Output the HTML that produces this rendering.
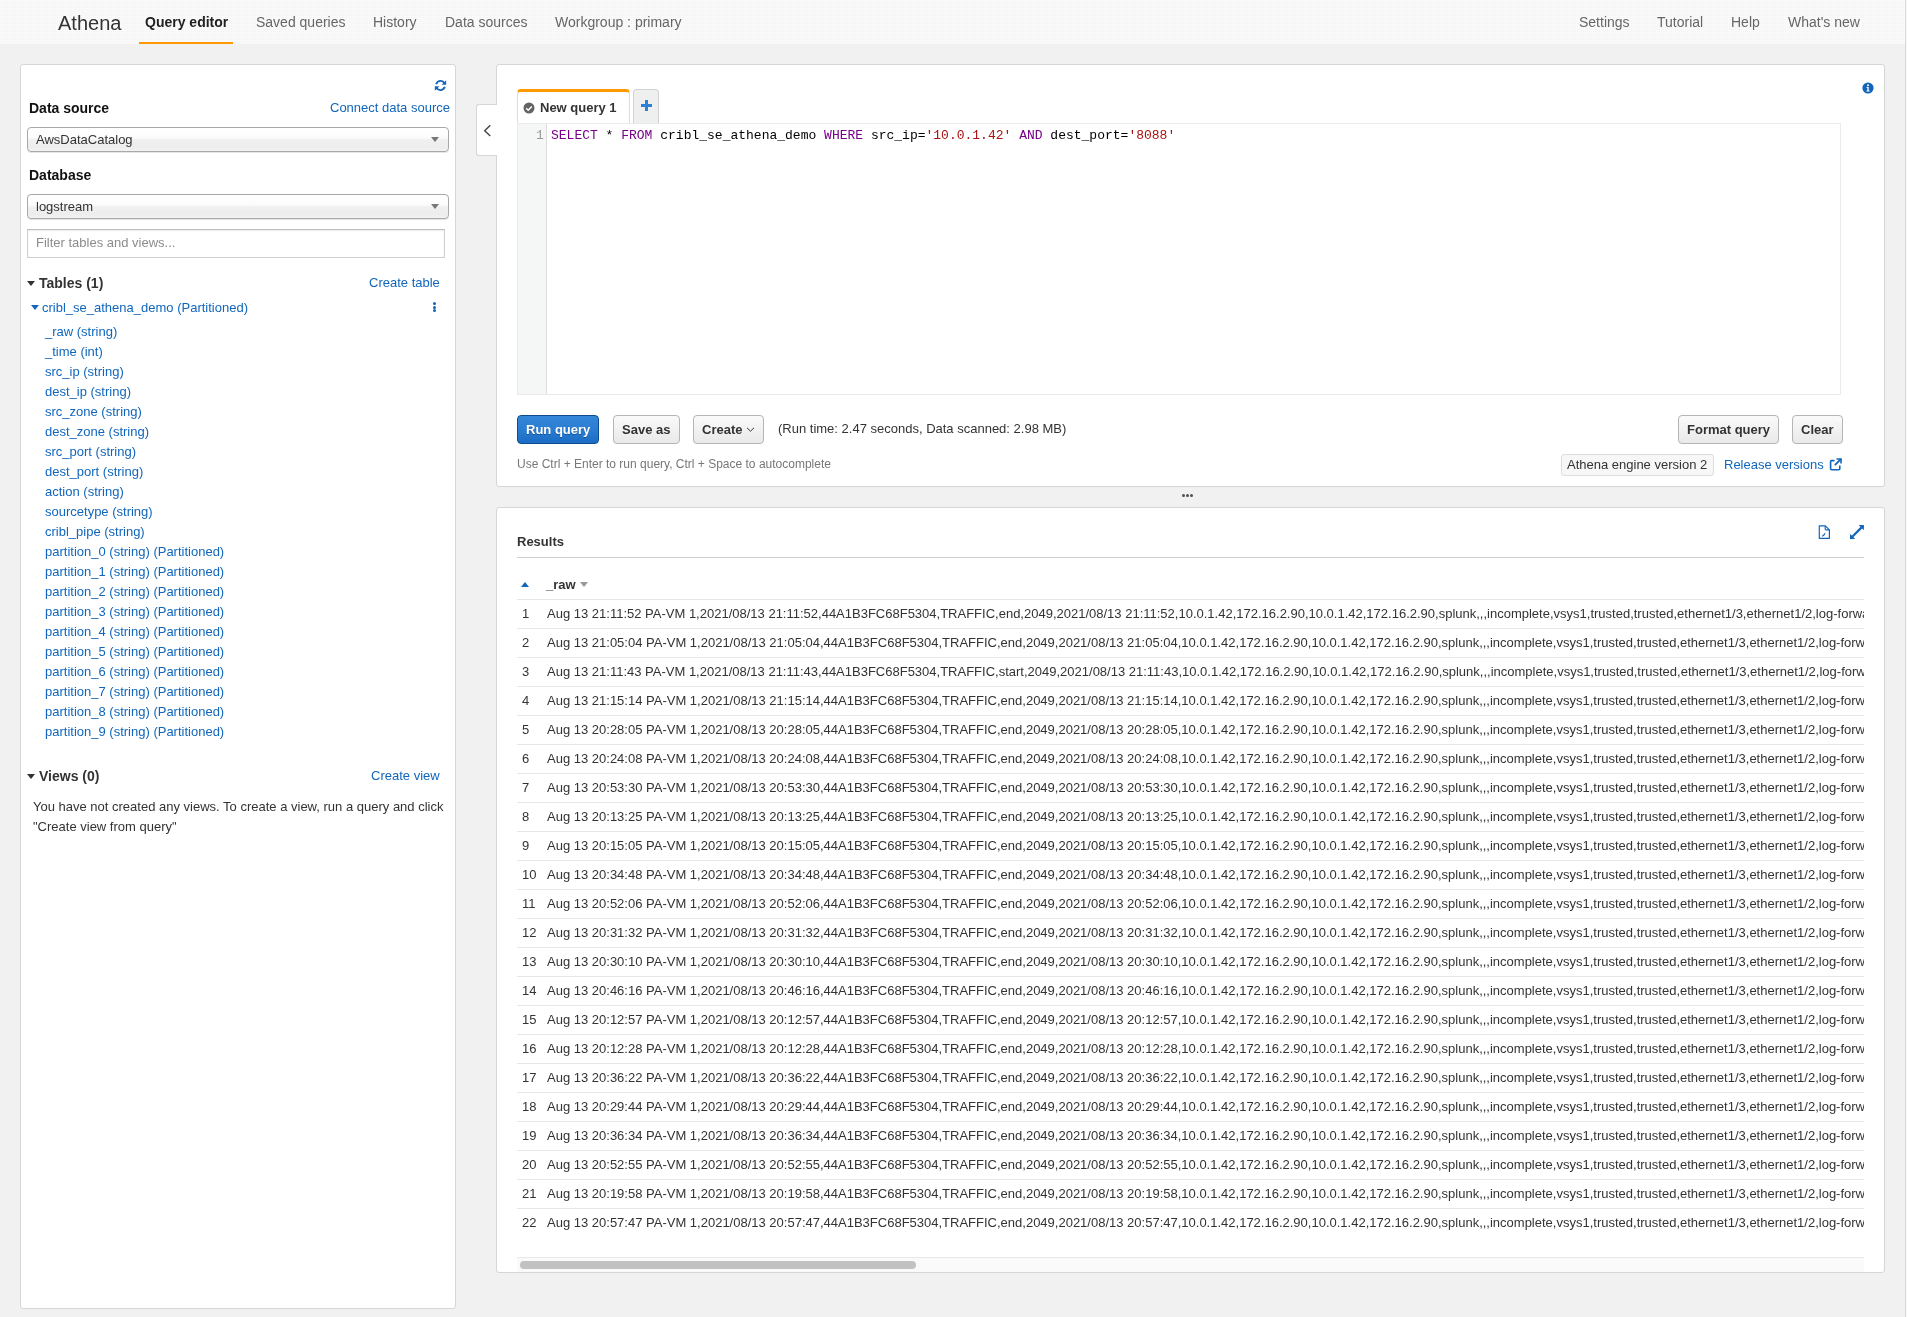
<!DOCTYPE html><html><head><meta charset="utf-8"><style>
*{margin:0;padding:0;box-sizing:border-box}
html,body{width:1907px;height:1317px;overflow:hidden;background:#f1f1f1;font-family:"Liberation Sans",sans-serif;color:#333;position:relative}
.t{position:absolute;white-space:nowrap;will-change:transform}
.b{font-weight:bold}
.lnk{color:#1166bb}
.abs{position:absolute}
#hdr{position:absolute;left:0;top:0;width:1905px;height:44px;background-color:#fafafa;background-image:radial-gradient(circle at 1.5px 1.5px,#f3f3f3 0.55px,rgba(250,250,250,0) 0.75px);background-size:2px 2px}
#vline{position:absolute;left:1905px;top:0;width:1px;height:1317px;background:#d9d9d9}
#vline2{position:absolute;left:1906px;top:0;width:1px;height:1317px;background:#f7f7f7}
.nav{color:#666}
.panel{position:absolute;background:#fff;border:1px solid #d6d6d6;border-radius:3px}
.sel{position:absolute;border:1px solid #a9a9a9;border-radius:4px;background:linear-gradient(#fff,#fcfcfc 42%,#f0f0f0 52%,#ededed 85%,#f3f3f3);box-shadow:0 1px 0 #e6e6e6}
.tri{position:absolute;width:0;height:0}
</style></head><body>
<div id="hdr"></div><div id="vline"></div><div id="vline2"></div>
<div class="t " style="left:58px;top:13.0px;font-size:20px;line-height:20px;color:#333">Athena</div>
<div class="t b" style="left:145px;top:15.0px;font-size:14px;line-height:14px;color:#222">Query editor</div>
<div class="abs" style="left:139px;top:42px;width:94px;height:2px;background:#ff9900"></div>
<div class="t nav" style="left:256px;top:15.0px;font-size:14px;line-height:14px;">Saved queries</div>
<div class="t nav" style="left:373px;top:15.0px;font-size:14px;line-height:14px;">History</div>
<div class="t nav" style="left:445px;top:15.0px;font-size:14px;line-height:14px;">Data sources</div>
<div class="t nav" style="left:555px;top:15.0px;font-size:14px;line-height:14px;">Workgroup : primary</div>
<div class="t nav" style="left:1578.5px;top:15.0px;font-size:14px;line-height:14px;">Settings</div>
<div class="t nav" style="left:1657px;top:15.0px;font-size:14px;line-height:14px;">Tutorial</div>
<div class="t nav" style="left:1730.7px;top:15.0px;font-size:14px;line-height:14px;">Help</div>
<div class="t nav" style="left:1788px;top:15.0px;font-size:14px;line-height:14px;">What's new</div>
<div class="panel" style="left:20px;top:64px;width:436px;height:1245px"></div>
<svg class="abs" style="left:434px;top:79px" width="13" height="13" viewBox="0 0 13 13"><path d="M10.6 4.2A4.6 4.6 0 0 0 2.2 5.2" fill="none" stroke="#1166bb" stroke-width="1.9"/><path d="M12.2 1.2v4.6H7.6z" fill="#1166bb"/><path d="M2.4 8.8A4.6 4.6 0 0 0 10.8 7.8" fill="none" stroke="#1166bb" stroke-width="1.9"/><path d="M0.8 11.8V7.2h4.6z" fill="#1166bb"/></svg>
<div class="t b" style="left:29px;top:101.0px;font-size:14px;line-height:14px;color:#111">Data source</div>
<div class="t lnk" style="right:1457.4px;top:100.6px;font-size:13px;line-height:13px;">Connect data source</div>
<div class="sel" style="left:27px;top:127px;width:422px;height:25px"></div>
<div class="t " style="left:36px;top:133.0px;font-size:13px;line-height:13px;color:#333">AwsDataCatalog</div>
<div class="tri" style="left:431px;top:137px;border-left:4px solid transparent;border-right:4px solid transparent;border-top:5px solid #777"></div>
<div class="t b" style="left:29px;top:168.0px;font-size:14px;line-height:14px;color:#111">Database</div>
<div class="sel" style="left:27px;top:194px;width:422px;height:25px"></div>
<div class="t " style="left:36px;top:200.0px;font-size:13px;line-height:13px;color:#333">logstream</div>
<div class="tri" style="left:431px;top:204px;border-left:4px solid transparent;border-right:4px solid transparent;border-top:5px solid #777"></div>
<div class="abs" style="left:27px;top:229px;width:418px;height:29px;border:1px solid #cfcfcf;border-top-color:#bcbcbc;box-shadow:inset 0 1px 2px rgba(0,0,0,.07)"></div>
<div class="t " style="left:36px;top:236.4px;font-size:13px;line-height:13px;color:#8c8c8c">Filter tables and views...</div>
<div class="tri" style="left:27px;top:281px;border-left:4px solid transparent;border-right:4px solid transparent;border-top:5px solid #333"></div>
<div class="t b" style="left:39px;top:276.0px;font-size:14px;line-height:14px;color:#333">Tables (1)</div>
<div class="t lnk" style="right:1467px;top:276.0px;font-size:13px;line-height:13px;">Create table</div>
<div class="tri" style="left:30.5px;top:305px;border-left:4px solid transparent;border-right:4px solid transparent;border-top:5px solid #1166bb"></div>
<div class="t lnk" style="left:42px;top:301.0px;font-size:13px;line-height:13px;">cribl_se_athena_demo (Partitioned)</div>
<div class="abs" style="left:432.5px;top:301.7px;width:3px;height:3px;border-radius:50%;background:#1166bb"></div><div class="abs" style="left:432.5px;top:305.5px;width:3px;height:3px;border-radius:50%;background:#1166bb"></div><div class="abs" style="left:432.5px;top:309.3px;width:3px;height:3px;border-radius:50%;background:#1166bb"></div>
<div class="t lnk" style="left:45px;top:325.0px;font-size:13px;line-height:13px;">_raw (string)</div>
<div class="t lnk" style="left:45px;top:345.0px;font-size:13px;line-height:13px;">_time (int)</div>
<div class="t lnk" style="left:45px;top:365.0px;font-size:13px;line-height:13px;">src_ip (string)</div>
<div class="t lnk" style="left:45px;top:385.0px;font-size:13px;line-height:13px;">dest_ip (string)</div>
<div class="t lnk" style="left:45px;top:405.0px;font-size:13px;line-height:13px;">src_zone (string)</div>
<div class="t lnk" style="left:45px;top:425.0px;font-size:13px;line-height:13px;">dest_zone (string)</div>
<div class="t lnk" style="left:45px;top:445.0px;font-size:13px;line-height:13px;">src_port (string)</div>
<div class="t lnk" style="left:45px;top:465.0px;font-size:13px;line-height:13px;">dest_port (string)</div>
<div class="t lnk" style="left:45px;top:485.0px;font-size:13px;line-height:13px;">action (string)</div>
<div class="t lnk" style="left:45px;top:505.0px;font-size:13px;line-height:13px;">sourcetype (string)</div>
<div class="t lnk" style="left:45px;top:525.0px;font-size:13px;line-height:13px;">cribl_pipe (string)</div>
<div class="t lnk" style="left:45px;top:545.0px;font-size:13px;line-height:13px;">partition_0 (string) (Partitioned)</div>
<div class="t lnk" style="left:45px;top:565.0px;font-size:13px;line-height:13px;">partition_1 (string) (Partitioned)</div>
<div class="t lnk" style="left:45px;top:585.0px;font-size:13px;line-height:13px;">partition_2 (string) (Partitioned)</div>
<div class="t lnk" style="left:45px;top:605.0px;font-size:13px;line-height:13px;">partition_3 (string) (Partitioned)</div>
<div class="t lnk" style="left:45px;top:625.0px;font-size:13px;line-height:13px;">partition_4 (string) (Partitioned)</div>
<div class="t lnk" style="left:45px;top:645.0px;font-size:13px;line-height:13px;">partition_5 (string) (Partitioned)</div>
<div class="t lnk" style="left:45px;top:665.0px;font-size:13px;line-height:13px;">partition_6 (string) (Partitioned)</div>
<div class="t lnk" style="left:45px;top:685.0px;font-size:13px;line-height:13px;">partition_7 (string) (Partitioned)</div>
<div class="t lnk" style="left:45px;top:705.0px;font-size:13px;line-height:13px;">partition_8 (string) (Partitioned)</div>
<div class="t lnk" style="left:45px;top:725.0px;font-size:13px;line-height:13px;">partition_9 (string) (Partitioned)</div>
<div class="tri" style="left:27px;top:774px;border-left:4px solid transparent;border-right:4px solid transparent;border-top:5px solid #333"></div>
<div class="t b" style="left:38.5px;top:769.0px;font-size:14px;line-height:14px;color:#333">Views (0)</div>
<div class="t lnk" style="right:1467px;top:769.0px;font-size:13px;line-height:13px;">Create view</div>
<div class="t " style="left:32.7px;top:800.0px;font-size:13px;line-height:13px;color:#333">You have not created any views. To create a view, run a query and click</div>
<div class="t " style="left:32.7px;top:820.0px;font-size:13px;line-height:13px;color:#333">"Create view from query"</div>
<div class="panel" style="left:496px;top:64px;width:1389px;height:423px"></div>
<div class="abs" style="left:476px;top:104px;width:21px;height:52px;background:#fff;border:1px solid #d6d6d6;border-right:none;border-radius:3px 0 0 3px"></div>
<svg class="abs" style="left:482px;top:124px" width="12" height="14" viewBox="0 0 12 14"><path d="M8.3 1.3L2.7 6.7l5.6 5.3" fill="none" stroke="#444" stroke-width="1.4"/></svg>
<div class="abs" style="left:517px;top:89px;width:113px;height:35px;background:#fff;border:1px solid #ddd;border-top:3px solid #ff9900;border-bottom:none;border-radius:4px 4px 0 0"></div>
<svg class="abs" style="left:523px;top:102.4px" width="12" height="12" viewBox="0 0 12 12"><circle cx="6" cy="6" r="5.5" fill="#646464"/><path d="M3.2 6.2l2 2 3.6-3.8" fill="none" stroke="#fff" stroke-width="1.5"/></svg>
<div class="t b" style="left:540px;top:101.0px;font-size:13px;line-height:13px;color:#333">New query 1</div>
<div class="abs" style="left:633px;top:89px;width:26px;height:35px;background:#eef0f0;border:1px solid #d2d2d2;border-bottom:none;border-radius:4px 4px 0 0"></div>
<div class="abs" style="left:641px;top:104.4px;width:10.5px;height:2.8px;background:#2f7fd4"></div><div class="abs" style="left:644.9px;top:100.4px;width:2.8px;height:10.5px;background:#2f7fd4"></div>
<div class="abs" style="left:517px;top:123px;width:1324px;height:272px;border:1px solid #eaecec;background:#fff"></div>
<div class="abs" style="left:518px;top:124px;width:29px;height:270px;background:#f5f7f7;border-right:1px solid #dddddd"></div>
<div class="t " style="left:536px;top:129.0px;font-size:13px;line-height:13px;font-family:'Liberation Mono',monospace;color:#999">1</div>
<div class="t " style="left:551px;top:129.0px;font-size:13px;line-height:13px;font-family:'Liberation Mono',monospace;color:#000"><span style="color:#770088">SELECT</span> * <span style="color:#770088">FROM</span> cribl_se_athena_demo <span style="color:#770088">WHERE</span> src_ip=<span style="color:#aa1111">'10.0.1.42'</span> <span style="color:#770088">AND</span> dest_port=<span style="color:#aa1111">'8088'</span></div>
<svg class="abs" style="left:1862px;top:82px" width="12" height="12" viewBox="0 0 12 12"><circle cx="6" cy="6" r="5.6" fill="#1166bb"/><circle cx="6" cy="3.2" r="1" fill="#fff"/><path d="M4.6 5h2.1v3.6h.9v1H4.5v-1h.9V6H4.6z" fill="#fff"/></svg>
<div class="abs" style="left:517px;top:415px;width:82px;height:29px;border:1px solid #0c4c8e;border-radius:4px;background:linear-gradient(#3386d8,#2a7dd2 50%,#1b6cc4)"></div>
<div class="t b" style="left:526px;top:423.0px;font-size:13px;line-height:13px;color:#fff;text-shadow:0 1px 0 rgba(0,40,90,.45)">Run query</div>
<div class="abs" style="left:613px;top:415px;width:67px;height:29px;border:1px solid #b5b5b5;border-radius:4px;background:linear-gradient(#fafafa,#e9e9e9)"></div>
<div class="abs" style="left:693px;top:415px;width:71px;height:29px;border:1px solid #b5b5b5;border-radius:4px;background:linear-gradient(#fafafa,#e9e9e9)"></div>
<div class="abs" style="left:1678px;top:415px;width:101px;height:29px;border:1px solid #b5b5b5;border-radius:4px;background:linear-gradient(#fafafa,#e9e9e9)"></div>
<div class="abs" style="left:1792px;top:415px;width:51px;height:29px;border:1px solid #b5b5b5;border-radius:4px;background:linear-gradient(#fafafa,#e9e9e9)"></div>
<div class="t b" style="left:622px;top:423.0px;font-size:13px;line-height:13px;color:#333">Save as</div>
<div class="t b" style="left:702px;top:423.0px;font-size:13px;line-height:13px;color:#333">Create</div>
<svg class="abs" style="left:746px;top:426px" width="9" height="6" viewBox="0 0 9 6"><path d="M1 1.8l3.5 3.4 3.5-3.4" fill="none" stroke="#333" stroke-width="1"/></svg>
<div class="t b" style="left:1687px;top:423.0px;font-size:13px;line-height:13px;color:#333">Format query</div>
<div class="t b" style="left:1801px;top:423.0px;font-size:13px;line-height:13px;color:#333">Clear</div>
<div class="t " style="left:778px;top:422.0px;font-size:13px;line-height:13px;color:#333">(Run time: 2.47 seconds, Data scanned: 2.98 MB)</div>
<div class="t " style="left:517px;top:458.0px;font-size:12px;line-height:12px;color:#777">Use Ctrl + Enter to run query, Ctrl + Space to autocomplete</div>
<div class="abs" style="left:1561px;top:454px;width:153px;height:22px;border:1px solid #ddd;border-radius:3px;background:#f7f7f7"></div>
<div class="t " style="left:1567px;top:458.0px;font-size:13px;line-height:13px;color:#333">Athena engine version 2</div>
<div class="t lnk" style="left:1723.5px;top:458.0px;font-size:13px;line-height:13px;">Release versions</div>
<svg class="abs" style="left:1829px;top:458px" width="14" height="13" viewBox="0 0 14 13"><path d="M5.5 2.6H2.6q-1 0-1 1v7.2q0 1 1 1h7.2q1 0 1-1V7.6" fill="none" stroke="#1166bb" stroke-width="1.6"/><path d="M7.5 1h4.5v4.5" fill="none" stroke="#1166bb" stroke-width="1.6"/><path d="M11.8 1.2L5.8 7.2" stroke="#1166bb" stroke-width="1.8"/></svg>
<div class="abs" style="left:1182.4px;top:494.4px;width:3px;height:3px;border-radius:50%;background:#505050"></div><div class="abs" style="left:1186.2px;top:494.4px;width:3px;height:3px;border-radius:50%;background:#505050"></div><div class="abs" style="left:1190.0px;top:494.4px;width:3px;height:3px;border-radius:50%;background:#505050"></div>
<div class="panel" style="left:496px;top:507px;width:1389px;height:766px"></div>
<div class="t b" style="left:516.8px;top:535.0px;font-size:13px;line-height:13px;color:#333">Results</div>
<svg class="abs" style="left:1817px;top:524px" width="15" height="16" viewBox="0 0 15 16"><path d="M2.3 1.8h6l4.1 4.1v8.4H2.3z" fill="none" stroke="#1166bb" stroke-width="1.2" stroke-linejoin="round"/><path d="M8.2 1.8v3.3q0 .8.8.8h3.4" fill="none" stroke="#1166bb" stroke-width="1.1"/><path d="M5.2 12.3q2-1 2.9-3" fill="none" stroke="#1166bb" stroke-width="1.1"/></svg>
<svg class="abs" style="left:1849px;top:524px" width="16" height="16" viewBox="0 0 16 16"><path d="M14.9 1H9.7l5.2 5.2z M1 15.1V9.9l5.2 5.2z" fill="#1166bb"/><path d="M12.6 3.4L3.3 12.7" stroke="#1166bb" stroke-width="2.2"/></svg>
<div class="abs" style="left:517px;top:557px;width:1347px;height:1px;background:#cfcfcf"></div>
<div class="tri" style="left:520.8px;top:582px;border-left:4.7px solid transparent;border-right:4.7px solid transparent;border-bottom:5.6px solid #1166bb"></div>
<div class="t b" style="left:546px;top:578.0px;font-size:13px;line-height:13px;color:#333">_raw</div>
<div class="tri" style="left:579.8px;top:582px;border-left:4.7px solid transparent;border-right:4.7px solid transparent;border-top:5.6px solid #999"></div>
<div class="abs" style="left:517px;top:599px;width:1347px;height:1px;background:#e6e6e6"></div>
<div class="abs" style="left:517px;top:600px;width:1347px;height:660px;overflow:hidden">
<div class="t " style="left:4.7px;top:7.0px;font-size:13px;line-height:13px;color:#333">1</div>
<div class="t " style="left:30px;top:7.0px;font-size:13px;line-height:13px;color:#333">Aug 13 21:11:52 PA-VM 1,2021/08/13 21:11:52,44A1B3FC68F5304,TRAFFIC,end,2049,2021/08/13 21:11:52,10.0.1.42,172.16.2.90,10.0.1.42,172.16.2.90,splunk,,,incomplete,vsys1,trusted,trusted,ethernet1/3,ethernet1/2,log-forwarding-default,2021/08/13 21:11:52,12345,1,443,8088,0,0,0x0,tcp,allow</div>
<div class="abs" style="left:0;top:28px;width:1347px;height:1px;background:#e6e6e6"></div>
<div class="t " style="left:4.7px;top:36.0px;font-size:13px;line-height:13px;color:#333">2</div>
<div class="t " style="left:30px;top:36.0px;font-size:13px;line-height:13px;color:#333">Aug 13 21:05:04 PA-VM 1,2021/08/13 21:05:04,44A1B3FC68F5304,TRAFFIC,end,2049,2021/08/13 21:05:04,10.0.1.42,172.16.2.90,10.0.1.42,172.16.2.90,splunk,,,incomplete,vsys1,trusted,trusted,ethernet1/3,ethernet1/2,log-forwarding-default,2021/08/13 21:05:04,12345,1,443,8088,0,0,0x0,tcp,allow</div>
<div class="abs" style="left:0;top:57px;width:1347px;height:1px;background:#e6e6e6"></div>
<div class="t " style="left:4.7px;top:65.0px;font-size:13px;line-height:13px;color:#333">3</div>
<div class="t " style="left:30px;top:65.0px;font-size:13px;line-height:13px;color:#333">Aug 13 21:11:43 PA-VM 1,2021/08/13 21:11:43,44A1B3FC68F5304,TRAFFIC,start,2049,2021/08/13 21:11:43,10.0.1.42,172.16.2.90,10.0.1.42,172.16.2.90,splunk,,,incomplete,vsys1,trusted,trusted,ethernet1/3,ethernet1/2,log-forwarding-default,2021/08/13 21:11:43,12345,1,443,8088,0,0,0x0,tcp,allow</div>
<div class="abs" style="left:0;top:86px;width:1347px;height:1px;background:#e6e6e6"></div>
<div class="t " style="left:4.7px;top:94.0px;font-size:13px;line-height:13px;color:#333">4</div>
<div class="t " style="left:30px;top:94.0px;font-size:13px;line-height:13px;color:#333">Aug 13 21:15:14 PA-VM 1,2021/08/13 21:15:14,44A1B3FC68F5304,TRAFFIC,end,2049,2021/08/13 21:15:14,10.0.1.42,172.16.2.90,10.0.1.42,172.16.2.90,splunk,,,incomplete,vsys1,trusted,trusted,ethernet1/3,ethernet1/2,log-forwarding-default,2021/08/13 21:15:14,12345,1,443,8088,0,0,0x0,tcp,allow</div>
<div class="abs" style="left:0;top:115px;width:1347px;height:1px;background:#e6e6e6"></div>
<div class="t " style="left:4.7px;top:123.0px;font-size:13px;line-height:13px;color:#333">5</div>
<div class="t " style="left:30px;top:123.0px;font-size:13px;line-height:13px;color:#333">Aug 13 20:28:05 PA-VM 1,2021/08/13 20:28:05,44A1B3FC68F5304,TRAFFIC,end,2049,2021/08/13 20:28:05,10.0.1.42,172.16.2.90,10.0.1.42,172.16.2.90,splunk,,,incomplete,vsys1,trusted,trusted,ethernet1/3,ethernet1/2,log-forwarding-default,2021/08/13 20:28:05,12345,1,443,8088,0,0,0x0,tcp,allow</div>
<div class="abs" style="left:0;top:144px;width:1347px;height:1px;background:#e6e6e6"></div>
<div class="t " style="left:4.7px;top:152.0px;font-size:13px;line-height:13px;color:#333">6</div>
<div class="t " style="left:30px;top:152.0px;font-size:13px;line-height:13px;color:#333">Aug 13 20:24:08 PA-VM 1,2021/08/13 20:24:08,44A1B3FC68F5304,TRAFFIC,end,2049,2021/08/13 20:24:08,10.0.1.42,172.16.2.90,10.0.1.42,172.16.2.90,splunk,,,incomplete,vsys1,trusted,trusted,ethernet1/3,ethernet1/2,log-forwarding-default,2021/08/13 20:24:08,12345,1,443,8088,0,0,0x0,tcp,allow</div>
<div class="abs" style="left:0;top:173px;width:1347px;height:1px;background:#e6e6e6"></div>
<div class="t " style="left:4.7px;top:181.0px;font-size:13px;line-height:13px;color:#333">7</div>
<div class="t " style="left:30px;top:181.0px;font-size:13px;line-height:13px;color:#333">Aug 13 20:53:30 PA-VM 1,2021/08/13 20:53:30,44A1B3FC68F5304,TRAFFIC,end,2049,2021/08/13 20:53:30,10.0.1.42,172.16.2.90,10.0.1.42,172.16.2.90,splunk,,,incomplete,vsys1,trusted,trusted,ethernet1/3,ethernet1/2,log-forwarding-default,2021/08/13 20:53:30,12345,1,443,8088,0,0,0x0,tcp,allow</div>
<div class="abs" style="left:0;top:202px;width:1347px;height:1px;background:#e6e6e6"></div>
<div class="t " style="left:4.7px;top:210.0px;font-size:13px;line-height:13px;color:#333">8</div>
<div class="t " style="left:30px;top:210.0px;font-size:13px;line-height:13px;color:#333">Aug 13 20:13:25 PA-VM 1,2021/08/13 20:13:25,44A1B3FC68F5304,TRAFFIC,end,2049,2021/08/13 20:13:25,10.0.1.42,172.16.2.90,10.0.1.42,172.16.2.90,splunk,,,incomplete,vsys1,trusted,trusted,ethernet1/3,ethernet1/2,log-forwarding-default,2021/08/13 20:13:25,12345,1,443,8088,0,0,0x0,tcp,allow</div>
<div class="abs" style="left:0;top:231px;width:1347px;height:1px;background:#e6e6e6"></div>
<div class="t " style="left:4.7px;top:239.0px;font-size:13px;line-height:13px;color:#333">9</div>
<div class="t " style="left:30px;top:239.0px;font-size:13px;line-height:13px;color:#333">Aug 13 20:15:05 PA-VM 1,2021/08/13 20:15:05,44A1B3FC68F5304,TRAFFIC,end,2049,2021/08/13 20:15:05,10.0.1.42,172.16.2.90,10.0.1.42,172.16.2.90,splunk,,,incomplete,vsys1,trusted,trusted,ethernet1/3,ethernet1/2,log-forwarding-default,2021/08/13 20:15:05,12345,1,443,8088,0,0,0x0,tcp,allow</div>
<div class="abs" style="left:0;top:260px;width:1347px;height:1px;background:#e6e6e6"></div>
<div class="t " style="left:4.7px;top:268.0px;font-size:13px;line-height:13px;color:#333">10</div>
<div class="t " style="left:30px;top:268.0px;font-size:13px;line-height:13px;color:#333">Aug 13 20:34:48 PA-VM 1,2021/08/13 20:34:48,44A1B3FC68F5304,TRAFFIC,end,2049,2021/08/13 20:34:48,10.0.1.42,172.16.2.90,10.0.1.42,172.16.2.90,splunk,,,incomplete,vsys1,trusted,trusted,ethernet1/3,ethernet1/2,log-forwarding-default,2021/08/13 20:34:48,12345,1,443,8088,0,0,0x0,tcp,allow</div>
<div class="abs" style="left:0;top:289px;width:1347px;height:1px;background:#e6e6e6"></div>
<div class="t " style="left:4.7px;top:297.0px;font-size:13px;line-height:13px;color:#333">11</div>
<div class="t " style="left:30px;top:297.0px;font-size:13px;line-height:13px;color:#333">Aug 13 20:52:06 PA-VM 1,2021/08/13 20:52:06,44A1B3FC68F5304,TRAFFIC,end,2049,2021/08/13 20:52:06,10.0.1.42,172.16.2.90,10.0.1.42,172.16.2.90,splunk,,,incomplete,vsys1,trusted,trusted,ethernet1/3,ethernet1/2,log-forwarding-default,2021/08/13 20:52:06,12345,1,443,8088,0,0,0x0,tcp,allow</div>
<div class="abs" style="left:0;top:318px;width:1347px;height:1px;background:#e6e6e6"></div>
<div class="t " style="left:4.7px;top:326.0px;font-size:13px;line-height:13px;color:#333">12</div>
<div class="t " style="left:30px;top:326.0px;font-size:13px;line-height:13px;color:#333">Aug 13 20:31:32 PA-VM 1,2021/08/13 20:31:32,44A1B3FC68F5304,TRAFFIC,end,2049,2021/08/13 20:31:32,10.0.1.42,172.16.2.90,10.0.1.42,172.16.2.90,splunk,,,incomplete,vsys1,trusted,trusted,ethernet1/3,ethernet1/2,log-forwarding-default,2021/08/13 20:31:32,12345,1,443,8088,0,0,0x0,tcp,allow</div>
<div class="abs" style="left:0;top:347px;width:1347px;height:1px;background:#e6e6e6"></div>
<div class="t " style="left:4.7px;top:355.0px;font-size:13px;line-height:13px;color:#333">13</div>
<div class="t " style="left:30px;top:355.0px;font-size:13px;line-height:13px;color:#333">Aug 13 20:30:10 PA-VM 1,2021/08/13 20:30:10,44A1B3FC68F5304,TRAFFIC,end,2049,2021/08/13 20:30:10,10.0.1.42,172.16.2.90,10.0.1.42,172.16.2.90,splunk,,,incomplete,vsys1,trusted,trusted,ethernet1/3,ethernet1/2,log-forwarding-default,2021/08/13 20:30:10,12345,1,443,8088,0,0,0x0,tcp,allow</div>
<div class="abs" style="left:0;top:376px;width:1347px;height:1px;background:#e6e6e6"></div>
<div class="t " style="left:4.7px;top:384.0px;font-size:13px;line-height:13px;color:#333">14</div>
<div class="t " style="left:30px;top:384.0px;font-size:13px;line-height:13px;color:#333">Aug 13 20:46:16 PA-VM 1,2021/08/13 20:46:16,44A1B3FC68F5304,TRAFFIC,end,2049,2021/08/13 20:46:16,10.0.1.42,172.16.2.90,10.0.1.42,172.16.2.90,splunk,,,incomplete,vsys1,trusted,trusted,ethernet1/3,ethernet1/2,log-forwarding-default,2021/08/13 20:46:16,12345,1,443,8088,0,0,0x0,tcp,allow</div>
<div class="abs" style="left:0;top:405px;width:1347px;height:1px;background:#e6e6e6"></div>
<div class="t " style="left:4.7px;top:413.0px;font-size:13px;line-height:13px;color:#333">15</div>
<div class="t " style="left:30px;top:413.0px;font-size:13px;line-height:13px;color:#333">Aug 13 20:12:57 PA-VM 1,2021/08/13 20:12:57,44A1B3FC68F5304,TRAFFIC,end,2049,2021/08/13 20:12:57,10.0.1.42,172.16.2.90,10.0.1.42,172.16.2.90,splunk,,,incomplete,vsys1,trusted,trusted,ethernet1/3,ethernet1/2,log-forwarding-default,2021/08/13 20:12:57,12345,1,443,8088,0,0,0x0,tcp,allow</div>
<div class="abs" style="left:0;top:434px;width:1347px;height:1px;background:#e6e6e6"></div>
<div class="t " style="left:4.7px;top:442.0px;font-size:13px;line-height:13px;color:#333">16</div>
<div class="t " style="left:30px;top:442.0px;font-size:13px;line-height:13px;color:#333">Aug 13 20:12:28 PA-VM 1,2021/08/13 20:12:28,44A1B3FC68F5304,TRAFFIC,end,2049,2021/08/13 20:12:28,10.0.1.42,172.16.2.90,10.0.1.42,172.16.2.90,splunk,,,incomplete,vsys1,trusted,trusted,ethernet1/3,ethernet1/2,log-forwarding-default,2021/08/13 20:12:28,12345,1,443,8088,0,0,0x0,tcp,allow</div>
<div class="abs" style="left:0;top:463px;width:1347px;height:1px;background:#e6e6e6"></div>
<div class="t " style="left:4.7px;top:471.0px;font-size:13px;line-height:13px;color:#333">17</div>
<div class="t " style="left:30px;top:471.0px;font-size:13px;line-height:13px;color:#333">Aug 13 20:36:22 PA-VM 1,2021/08/13 20:36:22,44A1B3FC68F5304,TRAFFIC,end,2049,2021/08/13 20:36:22,10.0.1.42,172.16.2.90,10.0.1.42,172.16.2.90,splunk,,,incomplete,vsys1,trusted,trusted,ethernet1/3,ethernet1/2,log-forwarding-default,2021/08/13 20:36:22,12345,1,443,8088,0,0,0x0,tcp,allow</div>
<div class="abs" style="left:0;top:492px;width:1347px;height:1px;background:#e6e6e6"></div>
<div class="t " style="left:4.7px;top:500.0px;font-size:13px;line-height:13px;color:#333">18</div>
<div class="t " style="left:30px;top:500.0px;font-size:13px;line-height:13px;color:#333">Aug 13 20:29:44 PA-VM 1,2021/08/13 20:29:44,44A1B3FC68F5304,TRAFFIC,end,2049,2021/08/13 20:29:44,10.0.1.42,172.16.2.90,10.0.1.42,172.16.2.90,splunk,,,incomplete,vsys1,trusted,trusted,ethernet1/3,ethernet1/2,log-forwarding-default,2021/08/13 20:29:44,12345,1,443,8088,0,0,0x0,tcp,allow</div>
<div class="abs" style="left:0;top:521px;width:1347px;height:1px;background:#e6e6e6"></div>
<div class="t " style="left:4.7px;top:529.0px;font-size:13px;line-height:13px;color:#333">19</div>
<div class="t " style="left:30px;top:529.0px;font-size:13px;line-height:13px;color:#333">Aug 13 20:36:34 PA-VM 1,2021/08/13 20:36:34,44A1B3FC68F5304,TRAFFIC,end,2049,2021/08/13 20:36:34,10.0.1.42,172.16.2.90,10.0.1.42,172.16.2.90,splunk,,,incomplete,vsys1,trusted,trusted,ethernet1/3,ethernet1/2,log-forwarding-default,2021/08/13 20:36:34,12345,1,443,8088,0,0,0x0,tcp,allow</div>
<div class="abs" style="left:0;top:550px;width:1347px;height:1px;background:#e6e6e6"></div>
<div class="t " style="left:4.7px;top:558.0px;font-size:13px;line-height:13px;color:#333">20</div>
<div class="t " style="left:30px;top:558.0px;font-size:13px;line-height:13px;color:#333">Aug 13 20:52:55 PA-VM 1,2021/08/13 20:52:55,44A1B3FC68F5304,TRAFFIC,end,2049,2021/08/13 20:52:55,10.0.1.42,172.16.2.90,10.0.1.42,172.16.2.90,splunk,,,incomplete,vsys1,trusted,trusted,ethernet1/3,ethernet1/2,log-forwarding-default,2021/08/13 20:52:55,12345,1,443,8088,0,0,0x0,tcp,allow</div>
<div class="abs" style="left:0;top:579px;width:1347px;height:1px;background:#e6e6e6"></div>
<div class="t " style="left:4.7px;top:587.0px;font-size:13px;line-height:13px;color:#333">21</div>
<div class="t " style="left:30px;top:587.0px;font-size:13px;line-height:13px;color:#333">Aug 13 20:19:58 PA-VM 1,2021/08/13 20:19:58,44A1B3FC68F5304,TRAFFIC,end,2049,2021/08/13 20:19:58,10.0.1.42,172.16.2.90,10.0.1.42,172.16.2.90,splunk,,,incomplete,vsys1,trusted,trusted,ethernet1/3,ethernet1/2,log-forwarding-default,2021/08/13 20:19:58,12345,1,443,8088,0,0,0x0,tcp,allow</div>
<div class="abs" style="left:0;top:608px;width:1347px;height:1px;background:#e6e6e6"></div>
<div class="t " style="left:4.7px;top:616.0px;font-size:13px;line-height:13px;color:#333">22</div>
<div class="t " style="left:30px;top:616.0px;font-size:13px;line-height:13px;color:#333">Aug 13 20:57:47 PA-VM 1,2021/08/13 20:57:47,44A1B3FC68F5304,TRAFFIC,end,2049,2021/08/13 20:57:47,10.0.1.42,172.16.2.90,10.0.1.42,172.16.2.90,splunk,,,incomplete,vsys1,trusted,trusted,ethernet1/3,ethernet1/2,log-forwarding-default,2021/08/13 20:57:47,12345,1,443,8088,0,0,0x0,tcp,allow</div>
</div>
<div class="abs" style="left:517px;top:1257px;width:1347px;height:15px;background:#fafafa;border-top:1px solid #e8e8e8"></div>
<div class="abs" style="left:520px;top:1261px;width:396px;height:8px;border-radius:4px;background:#c2c2c2"></div>
</body></html>
